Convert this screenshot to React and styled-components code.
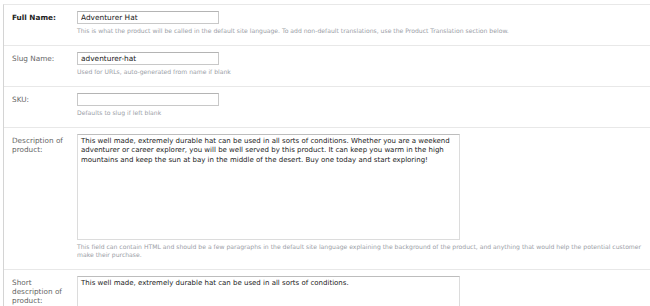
import styled, { createGlobalStyle } from 'styled-components';

const GlobalStyle = createGlobalStyle`
  html, body {
    margin: 0;
    padding: 0;
    background: #fff;
    overflow: hidden;
  }
  body {
    font-family: 'DejaVu Sans', Verdana, sans-serif;
  }
`;

const fields = [
  {
    label: 'Full Name:',
    strong: true,
    value: 'Adventurer Hat',
    help: 'This is what the product will be called in the default site language. To add non-default translations, use the Product Translation section below.',
  },
  {
    label: 'Slug Name:',
    value: 'adventurer-hat',
    help: 'Used for URLs, auto-generated from name if blank',
  },
  {
    label: 'SKU:',
    value: '',
    help: 'Defaults to slug if left blank',
  },
  {
    label: 'Description of product:',
    area: true,
    height: 106,
    value:
      'This well made, extremely durable hat can be used in all sorts of conditions. Whether you are a weekend adventurer or career explorer, you will be well served by this product. It can keep you warm in the high mountains and keep the sun at bay in the middle of the desert. Buy one today and start exploring!',
    help: 'This field can contain HTML and should be a few paragraphs in the default site language explaining the background of the product, and anything that would help the potential customer make their purchase.',
  },
  {
    label: 'Short description of product:',
    area: true,
    height: 60,
    value: 'This well made, extremely durable hat can be used in all sorts of conditions.',
  },
];

const Page = styled.div`
  height: 306px;
  overflow: hidden;
  padding-top: 4px;
`;

const Form = styled.div`
  margin-left: 3px;
  border-left: 1px solid #d4d4d4;
  border-top: 1px solid #e8e8e8;
  min-height: 400px;
`;

const Row = styled.div`
  display: grid;
  grid-template-columns: 65px 1fr;
  padding: 6px 0 10px 8px;
  border-bottom: 1px solid #e8e8e8;
`;

const Label = styled.label`
  font-size: 7.3px;
  line-height: 9px;
  color: ${(p) => (p.strong ? '#222' : '#666')};
  font-weight: ${(p) => (p.strong ? 'bold' : 'normal')};
  padding-top: 2px;
  padding-right: 6px;
`;

const Field = styled.div`
  display: flex;
  flex-direction: column;
`;

const Input = styled.input`
  box-sizing: border-box;
  width: 142px;
  height: 13px;
  margin: 0;
  padding: 0 3px;
  border: 1px solid #c8c8c8;
  border-top-color: #b4b4b4;
  font-family: 'DejaVu Sans', Verdana, sans-serif;
  font-size: 7.4px;
  color: #222;
  outline: none;
`;

const Area = styled.textarea`
  box-sizing: border-box;
  width: 383px;
  height: ${(p) => p.h}px;
  margin: 0;
  padding: 2px 3px;
  border: 1px solid #dcdcdc;
  border-top-color: #bdbdbd;
  font-family: 'DejaVu Sans', Verdana, sans-serif;
  font-size: 7px;
  line-height: 9.3px;
  color: #222;
  resize: none;
  outline: none;
  overflow: hidden;
`;

const Help = styled.div`
  margin-top: 3px;
  font-size: 6.1px;
  line-height: 8px;
  color: #9a9ea6;
  max-width: 566px;
`;

export default function App() {
  return (
    <>
      <GlobalStyle />
      <Page>
        <Form>
          {fields.map((f) => (
            <Row key={f.label}>
              <Label strong={f.strong}>{f.label}</Label>
              <Field>
                {f.area ? (
                  <Area h={f.height} defaultValue={f.value} />
                ) : (
                  <Input defaultValue={f.value} />
                )}
                {f.help && <Help>{f.help}</Help>}
              </Field>
            </Row>
          ))}
        </Form>
      </Page>
    </>
  );
}
